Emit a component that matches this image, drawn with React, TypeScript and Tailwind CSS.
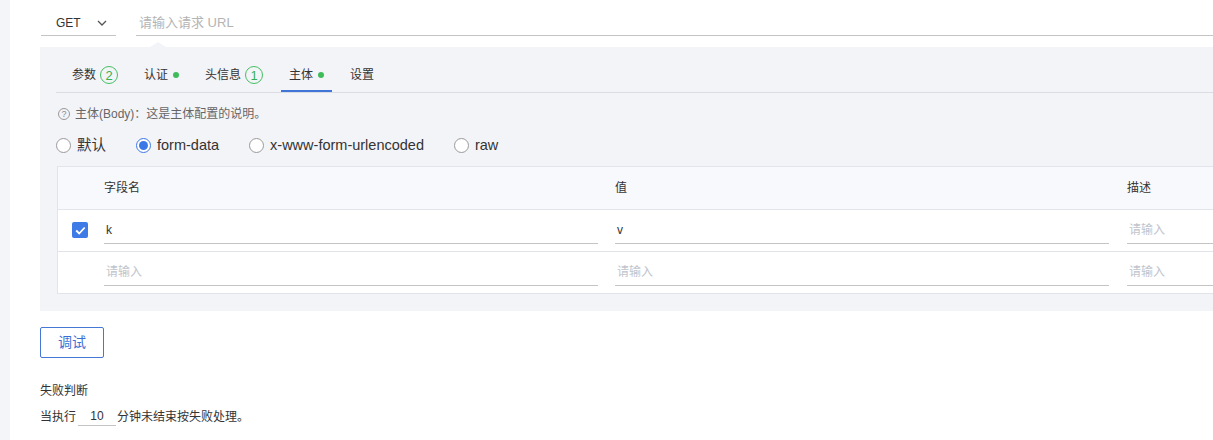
import { useState } from "react";

const font = { fontFamily: '"Liberation Sans", "Noto Sans CJK SC", sans-serif' };

function Badge({ n }: { n: number }) {
  return (
    <span className="ml-[4px] flex h-[18px] w-[18px] items-center justify-center rounded-full border border-[#45c062] text-[13px] leading-none text-[#35b052]">
      {n}
    </span>
  );
}

function Dot() {
  return <span className="ml-[5px] h-[6px] w-[6px] rounded-full bg-[#3fbb5a]" />;
}

function Radio({ label, checked }: { label: string; checked?: boolean }) {
  return (
    <label className="flex items-center gap-[6px] text-[14.5px] text-[#333]">
      <span
        className={
          "flex h-[15px] w-[15px] items-center justify-center rounded-full border bg-white " +
          (checked ? "border-[#3b78e7]" : "border-[#9a9a9a]")
        }
      >
        {checked && <span className="h-[9px] w-[9px] rounded-full bg-[#3b78e7]" />}
      </span>
      {label}
    </label>
  );
}

function Cell({ value, placeholder = "请输入" }: { value?: string; placeholder?: string }) {
  return (
    <div className="flex h-[28px] items-center border-b border-[#c4c4c4] px-[2px] text-[12px]">
      {value ? (
        <span className="text-[#333]">{value}</span>
      ) : (
        <span className="text-[#c0c4cc]">{placeholder}</span>
      )}
    </div>
  );
}

export default function App() {
  const [tab] = useState("body");

  const tabs = [
    { key: "params", label: "参数", extra: <Badge n={2} /> },
    { key: "auth", label: "认证", extra: <Dot /> },
    { key: "headers", label: "头信息", extra: <Badge n={1} /> },
    { key: "body", label: "主体", extra: <Dot /> },
    { key: "settings", label: "设置", extra: null },
  ];

  return (
    <div className="flex h-[440px] w-[1213px] overflow-hidden bg-white" style={font}>
      <div className="w-[10px] shrink-0 bg-[#f4f5f8]" />

      <div className="w-[1650px] shrink-0 pl-[30px] pt-[10px]">
        {/* request line */}
        <div className="flex h-[26px] items-stretch">
          <div className="ml-[1px] flex w-[75px] items-center justify-between border-b border-[#c4c4c4] pl-[15px] pr-[9px] text-[12px] text-[#333]">
            GET
            <svg width="10" height="6" viewBox="0 0 10 6" fill="none">
              <path d="M1 1l4 4 4-4" stroke="#555" strokeWidth="1.3" />
            </svg>
          </div>
          <div className="ml-[20px] flex flex-1 items-center border-b border-[#c4c4c4] pl-[3px] text-[13px] text-[#b4b4b4]">
            请输入请求 URL
          </div>
        </div>

        {/* panel */}
        <div className="relative mt-[11px] bg-[#f3f4f8] pb-[17px] pl-[16px] pt-[12px]">
          <div className="absolute left-[110px] top-[-5px] h-0 w-0 border-x-[8px] border-b-[5px] border-x-transparent border-b-[#f3f4f8]" />

          <div className="flex gap-[10px] border-b border-[#d9dce2] pl-[8px]">
            {tabs.map((t) => (
              <div
                key={t.key}
                className={
                  "flex h-[33px] items-center border-b-2 px-[8px] pt-[1px] text-[12px] text-[#333] " +
                  (t.key === tab ? "border-[#3f74d8]" : "border-transparent")
                }
              >
                {t.label}
                {t.extra}
              </div>
            ))}
          </div>

          <div className="mt-[12px] flex items-center gap-[5px] pl-[2px] text-[12px] text-[#666]">
            <span className="flex h-[12px] w-[12px] items-center justify-center rounded-full border border-[#999] text-[9px] leading-none text-[#888]">
              ?
            </span>
            主体(Body)：这是主体配置的说明。
          </div>

          <div className="mt-[12px] flex items-center gap-[30px]">
            <Radio label="默认" />
            <Radio label="form-data" checked />
            <Radio label="x-www-form-urlencoded" />
            <Radio label="raw" />
          </div>

          <div className="ml-[1px] mt-[9px] border border-[#e1e4ea] bg-white">
            <div className="grid h-[43px] grid-cols-[46px_511px_512px_512px] items-center border-b border-[#e1e4ea] bg-[#f8f9fc] text-[12px] text-[#333]">
              <div />
              <div>字段名</div>
              <div>值</div>
              <div>描述</div>
            </div>

            <div className="grid h-[42px] grid-cols-[46px_511px_512px_512px] items-center border-b border-[#e1e4ea]">
              <div className="flex pl-[14px]">
                <span className="flex h-[16px] w-[16px] items-center justify-center rounded-[2px] bg-[#3f7be6]">
                  <svg width="11" height="9" viewBox="0 0 11 9" fill="none">
                    <path d="M1.2 4.5l3 3 5.5-6" stroke="#fff" strokeWidth="1.8" />
                  </svg>
                </span>
              </div>
              <div className="pr-[17px]">
                <Cell value="k" />
              </div>
              <div className="pr-[18px]">
                <Cell value="v" />
              </div>
              <div className="pr-[18px]">
                <Cell />
              </div>
            </div>

            <div className="grid h-[41px] grid-cols-[46px_511px_512px_512px] items-center">
              <div />
              <div className="pr-[17px]">
                <Cell />
              </div>
              <div className="pr-[18px]">
                <Cell />
              </div>
              <div className="pr-[18px]">
                <Cell />
              </div>
            </div>
          </div>
        </div>

        <button className="mt-[16px] h-[31px] w-[64px] rounded-[2px] border border-[#4477d6] text-[14px] text-[#3b6fd4]">
          调试
        </button>

        <div className="mt-[24px] text-[12px] text-[#333]">失败判断</div>
        <div className="mt-[8px] flex items-center text-[12px] text-[#333]">
          当执行
          <span className="ml-[2px] mr-[1px] flex h-[18px] w-[38px] items-center justify-center border-b border-[#c4c4c4] text-[#333]">
            10
          </span>
          分钟未结束按失败处理。
        </div>
      </div>
    </div>
  );
}
